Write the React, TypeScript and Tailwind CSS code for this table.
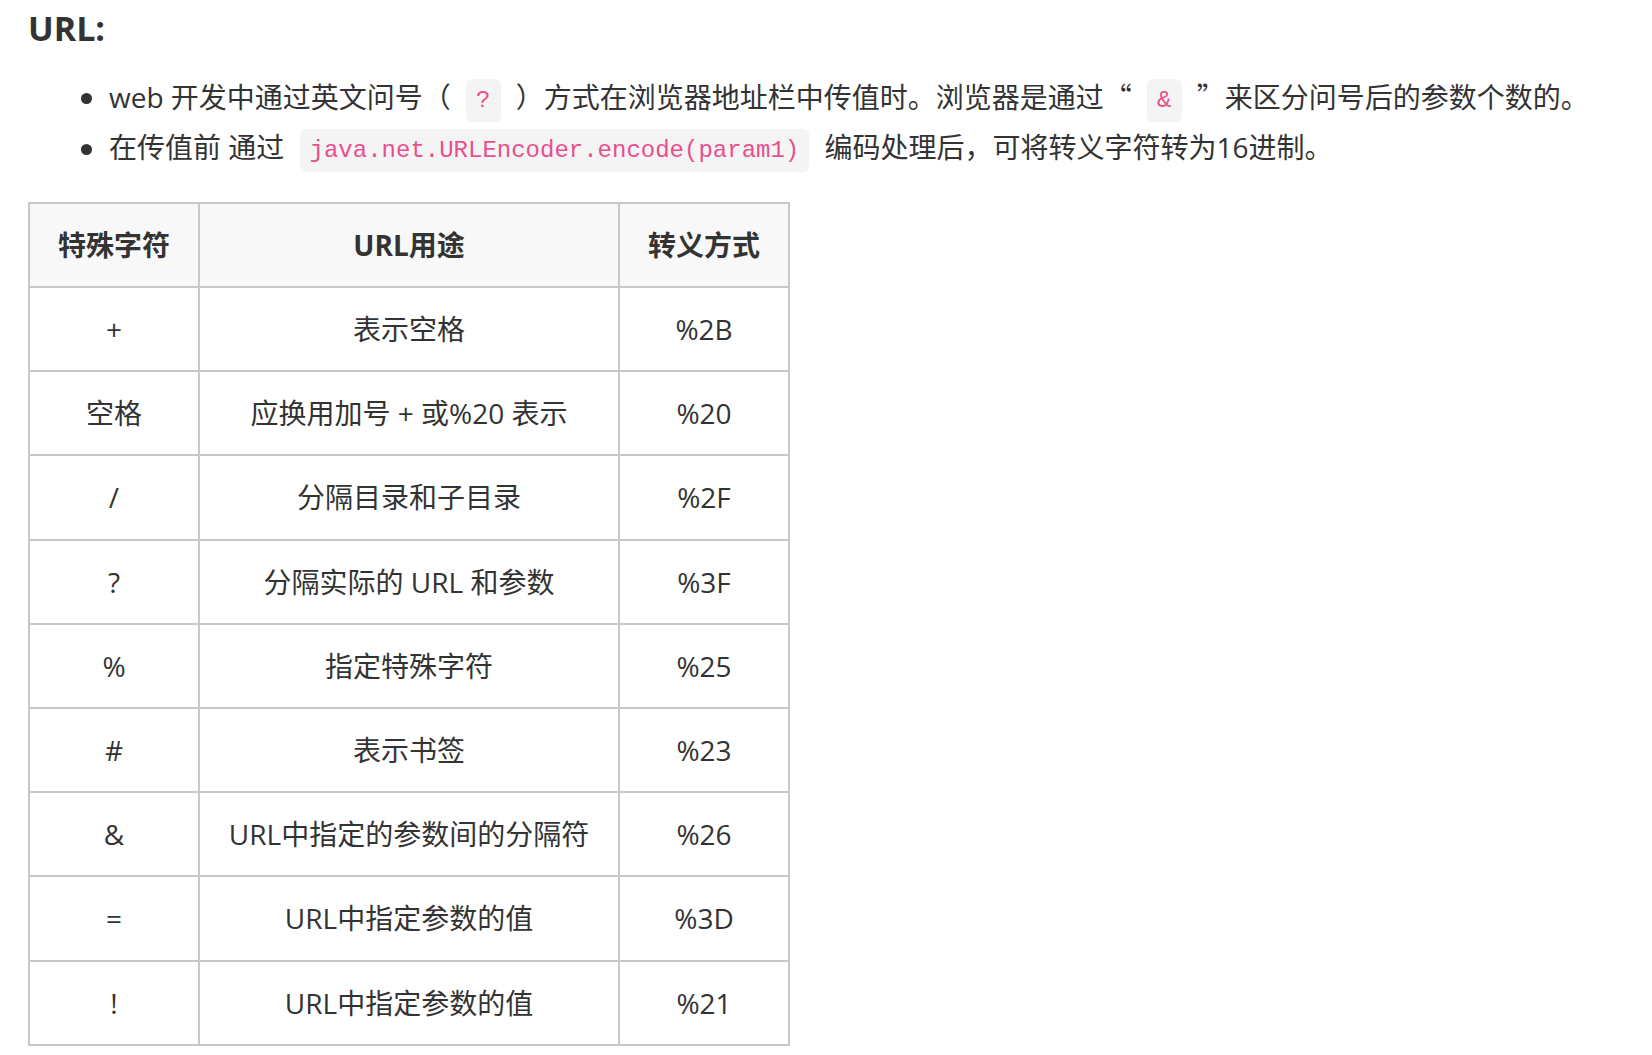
const rows: [string, string, string][] = [
  ['+', '表示空格', '%2B'],
  ['空格', '应换用加号 + 或%20 表示', '%20'],
  ['/', '分隔目录和子目录', '%2F'],
  ['?', '分隔实际的 URL 和参数', '%3F'],
  ['%', '指定特殊字符', '%25'],
  ['#', '表示书签', '%23'],
  ['&', 'URL中指定的参数间的分隔符', '%26'],
  ['=', 'URL中指定参数的值', '%3D'],
  ['!', 'URL中指定参数的值', '%21'],
];

function Code({ children }: { children: string }) {
  return (
    <code className="inline-block align-middle mx-[8px] px-[10px] py-[8px] rounded-[6px] bg-[#f4f4f4] text-[#e94f8e] text-[24px] leading-[27px] font-['Liberation_Mono',monospace]">
      {children}
    </code>
  );
}

function Bullet() {
  return <span className="block shrink-0 self-center w-[11px] h-[11px] mt-[3px] ml-[53px] mr-[17px] rounded-full bg-[#333]" />;
}

const cjk = "font-['Noto_Sans_CJK_SC',sans-serif]";
const cell = 'border-2 border-[#c8c8c8]';

export default function App() {
  return (
    <div className="min-h-screen bg-white pl-[28px] pt-[3px] text-[#333] font-['Open_Sans','Noto_Sans_CJK_SC',sans-serif]">
      <h3 className="text-[34px] leading-[50px] font-bold">URL:</h3>

      <ul className="mt-[18px] text-[28px]">
        <li className="flex items-baseline h-[51px] leading-[51px] whitespace-nowrap">
          <Bullet />
          <span>
            web 开发中通过英文问号（ <Code>?</Code> ）方式在浏览器地址栏中传值时。浏览器是通过
            <span className={cjk}>“</span> <Code>&amp;</Code> <span className={cjk}>”</span>来区分问号后的参数个数的。
          </span>
        </li>
        <li className="flex items-baseline h-[51px] leading-[51px] whitespace-nowrap">
          <Bullet />
          <span>
            在传值前 通过 <Code>java.net.URLEncoder.encode(param1)</Code> 编码处理后，可将转义字符转为16进制。
          </span>
        </li>
      </ul>

      <table className="mt-[29px] w-[760px] table-fixed border-collapse text-[28px] text-center">
        <colgroup>
          <col className="w-[170px]" />
          <col className="w-[420px]" />
          <col className="w-[170px]" />
        </colgroup>
        <thead>
          <tr className="h-[84px] bg-[#f8f8f8]">
            <th className={`${cell} font-bold`}>特殊字符</th>
            <th className={`${cell} font-bold`}>URL用途</th>
            <th className={`${cell} font-bold`}>转义方式</th>
          </tr>
        </thead>
        <tbody>
          {rows.map((r, i) => (
            <tr key={i} className="h-[84.2px]">
              <td className={cell}>{r[0]}</td>
              <td className={`${cell} whitespace-nowrap`}>{r[1]}</td>
              <td className={cell}>{r[2]}</td>
            </tr>
          ))}
        </tbody>
      </table>
    </div>
  );
}
